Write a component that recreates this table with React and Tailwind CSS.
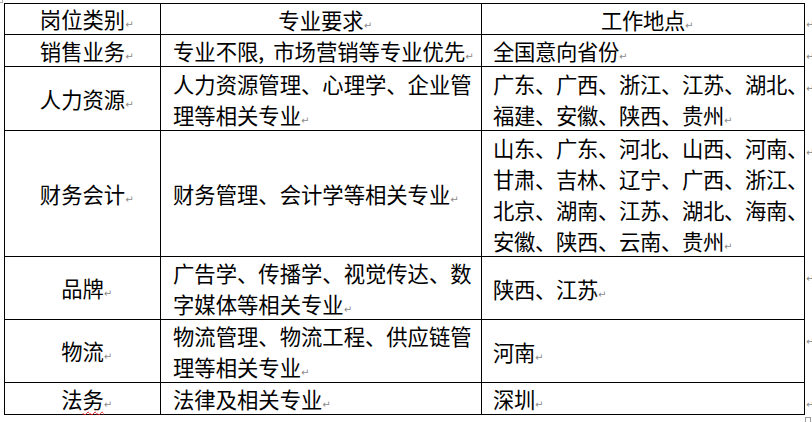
import React from "react";

const Mark = () => (
  <span
    className="inline-block w-0 overflow-visible whitespace-nowrap align-baseline text-[10px] leading-none tracking-normal text-[#8a8a8a]"
    style={{ fontFamily: '"DejaVu Sans", sans-serif' }}
  >
    ↵
  </span>
);

const rows = [
  {
    h: "h-[32px]",
    c1: "岗位类别",
    c2: ["专业要求"],
    c3: ["工作地点"],
    header: true,
  },
  {
    h: "h-[32px]",
    c1: "销售业务",
    c2: [
      <>
        专业不限<span className="pr-[9px]">,</span>市场营销等专业优先
      </>,
    ],
    c3: ["全国意向省份"],
  },
  {
    h: "h-[64px]",
    c1: "人力资源",
    c2: ["人力资源管理、心理学、企业管", "理等相关专业"],
    c3: ["广东、广西、浙江、江苏、湖北、", "福建、安徽、陕西、贵州"],
  },
  {
    h: "h-[126px]",
    c1: "财务会计",
    c2: ["财务管理、会计学等相关专业"],
    c3: [
      "山东、广东、河北、山西、河南、",
      "甘肃、吉林、辽宁、广西、浙江、",
      "北京、湖南、江苏、湖北、海南、",
      "安徽、陕西、云南、贵州",
    ],
  },
  {
    h: "h-[63px]",
    c1: "品牌",
    c2: ["广告学、传播学、视觉传达、数", "字媒体等相关专业"],
    c3: ["陕西、江苏"],
  },
  {
    h: "h-[63px]",
    c1: "物流",
    c2: ["物流管理、物流工程、供应链管", "理等相关专业"],
    c3: ["河南"],
  },
  { h: "h-[32px]", c1: "法务", c2: ["法律及相关专业"], c3: ["深圳"], wavy: true },
];

function Lines({ lines }) {
  return (
    <div className="whitespace-nowrap leading-[31px]">
      {lines.map((l, i) => (
        <div key={i}>
          {l}
          {i === lines.length - 1 && <Mark />}
        </div>
      ))}
    </div>
  );
}

export default function App() {
  return (
    <div
      className="relative h-[422px] w-[812px] overflow-hidden bg-white text-[21.33px] text-black"
      style={{ fontFamily: '"Noto Sans CJK SC", "Noto Sans", sans-serif' }}
    >
      {/* top-left crop mark */}
      <div className="absolute left-0 top-0 h-[3px] w-[3px] border-b border-r border-[#b0b0b0]" />
      {/* bottom-right resize handle */}
      <div className="absolute left-[805px] top-[417px] h-[6px] w-[6px] border-l border-r border-t border-[#9a9a9a]" />

      <div className="ml-[4px] mt-[3px] grid grid-cols-[157px_321px_323px_7px]">
        {rows.map((r, ri) => {
          const top = ri === 0 ? "border-t" : "";
          return (
            <React.Fragment key={ri}>
              <div
                className={`${r.h} ${top} flex items-center justify-center border-b border-l border-r border-black`}
              >
                <span className="whitespace-nowrap">
                  {r.wavy ? (
                    <>
                      法
                      <span className="underline decoration-wavy decoration-[#e02020] decoration-1 underline-offset-[3px]">
                        务
                      </span>
                    </>
                  ) : (
                    r.c1
                  )}
                  <Mark />
                </span>
              </div>
              <div
                className={`${r.h} ${top} flex items-center border-b border-r border-black ${
                  r.header ? "justify-center" : "pl-[12px]"
                }`}
              >
                <Lines lines={r.c2} />
              </div>
              <div
                className={`${r.h} ${top} flex items-center border-b border-r border-black tracking-[-0.33px] ${
                  r.header ? "justify-center" : "pl-[11px]"
                }`}
              >
                <Lines lines={r.c3} />
              </div>
              <div className={`${r.h} pl-[1px] leading-[31px]`}>
                <Mark />
              </div>
            </React.Fragment>
          );
        })}
      </div>
    </div>
  );
}
